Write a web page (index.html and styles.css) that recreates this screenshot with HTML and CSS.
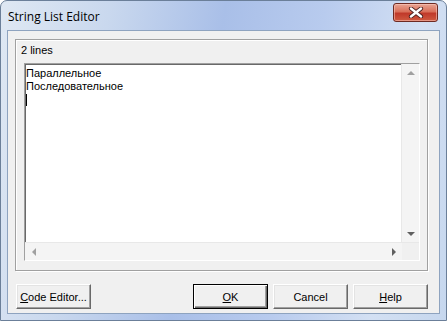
FILE: index.html
```html
<!DOCTYPE html>
<html lang="en">
<head>
    <meta charset="UTF-8">
    <title>String List Editor</title>
    <link rel="stylesheet" href="styles.css">
</head>
<body>
    <div class="window">
        <div class="titlebar">
            <span class="title">String List Editor</span>
            <div class="close-btn">
                <svg width="16" height="11" viewBox="0 0 16 11">
                    <path d="M3 1.5 L13 9.5 M13 1.5 L3 9.5" stroke="#4a2020" stroke-width="4.2" stroke-linecap="round"/>
                    <path d="M3 1.5 L13 9.5 M13 1.5 L3 9.5" stroke="#ffffff" stroke-width="2.4" stroke-linecap="round"/>
                </svg>
            </div>
        </div>

        <div class="client">
            <div class="panel">
                <div class="count">2 lines</div>
                <div class="memo">
                    <div class="memo-main">
                        <div class="memo-text">
                            <div>Параллельное</div>
                            <div>Последовательное</div>
                            <div class="caret"></div>
                        </div>
                        <div class="vscroll">
                            <div class="arrow up"></div>
                            <div class="track"></div>
                            <div class="arrow down"></div>
                        </div>
                    </div>
                    <div class="hscroll">
                        <div class="arrow left"></div>
                        <div class="track"></div>
                        <div class="arrow right"></div>
                        <div class="corner"></div>
                    </div>
                </div>
            </div>

            <div class="buttons">
                <button class="btn"><u>C</u>ode Editor...</button>
                <div class="right-buttons">
                    <button class="btn default"><u>O</u>K</button>
                    <button class="btn">Cancel</button>
                    <button class="btn"><u>H</u>elp</button>
                </div>
            </div>
        </div>
    </div>
</body>
</html>
```

FILE: styles.css
```css
body {
    margin: 0;
    background: #ffffff;
    font-family: "Liberation Sans", Arial, sans-serif;
}
.window {
    width: 447px;
    height: 321px;
    box-sizing: border-box;
    border: 1px solid #6b7f99;
    border-radius: 7px 7px 0 0;
    background: linear-gradient(100deg, #dfe8f3 0%, #c9d8ee 22%, #a9bfe8 45%, #b8cbee 65%, #d3e0f3 85%, #c6d7ee 100%);
    display: flex;
    flex-direction: column;
    overflow: hidden;
}
.titlebar {
    height: 29px;
    display: flex;
    align-items: flex-start;
    justify-content: space-between;
    padding: 0 7px 0 7px;
}
.title {
    font-family: "Open Sans", "Noto Sans", sans-serif;
    font-size: 12px;
    color: #000;
    margin-top: 7px;
}
.close-btn {
    width: 43px;
    height: 17px;
    margin-top: 2px;
    margin-right: 1px;
    border: 1px solid #6e2a22;
    border-radius: 3px;
    background: linear-gradient(#e8a493 0%, #d9705a 45%, #c0392a 55%, #cf5a40 100%);
    box-shadow: inset 0 0 0 1px rgba(255, 210, 200, 0.5);
    display: flex;
    align-items: center;
    justify-content: center;
}
.client {
    flex: 1;
    margin: 0 6px 6px 6px;
    border: 1px solid #8ea3bf;
    background: #f0f0f0;
    display: flex;
    flex-direction: column;
    padding: 8px 11px 0 7px;
}
.panel {
    height: 232px;
    box-sizing: border-box;
    border: 1px solid #a0a0a0;
    box-shadow: inset 1px 1px 0 #fff, 1px 1px 0 #fff;
    padding: 4px 7px 0 4px;
}
.count {
    font-size: 11px;
    height: 19px;
    line-height: 13px;
    padding-left: 1px;
}
.memo {
    height: 198px;
    box-sizing: border-box;
    border: 1px solid #a0a0a0;
    border-right-color: #fff;
    border-bottom-color: #fff;
    box-shadow: inset 1px 1px 0 #696969;
    background: #fff;
    margin-left: 4px;
    display: flex;
    flex-direction: column;
}
.memo-main {
    flex: 1;
    display: flex;
}
.memo-text {
    flex: 1;
    padding: 3px 0 0 1px;
    font-size: 11px;
    line-height: 13px;
}
.caret {
    width: 1px;
    height: 12px;
    background: #000;
    margin-top: 1px;
}
.vscroll {
    width: 17px;
    display: flex;
    flex-direction: column;
    background: #f4f4f4;
    border-left: 1px solid #e8e8e8;
}
.hscroll {
    height: 17px;
    display: flex;
    background: #f4f4f4;
    border-top: 1px solid #e8e8e8;
}
.track {
    flex: 1;
}
.arrow {
    width: 17px;
    height: 17px;
    display: flex;
    align-items: center;
    justify-content: center;
}
.arrow::after {
    content: "";
    width: 0;
    height: 0;
    border: 4px solid transparent;
}
.arrow.up::after {
    border-bottom-color: #a0a0a0;
    border-top-width: 0;
}
.arrow.down::after {
    border-top-color: #606060;
    border-bottom-width: 0;
}
.arrow.left::after {
    border-right-color: #a0a0a0;
    border-left-width: 0;
}
.arrow.right::after {
    border-left-color: #606060;
    border-right-width: 0;
}
.corner {
    width: 17px;
    background: #f0f0f0;
}
.buttons {
    display: flex;
    justify-content: space-between;
    margin-top: 13px;
    padding-left: 1px;
}
.right-buttons {
    display: flex;
    gap: 5px;
}
.btn {
    width: 75px;
    height: 25px;
    box-sizing: border-box;
    font-family: "Liberation Sans", Arial, sans-serif;
    font-size: 11px;
    color: #000;
    background: #f0f0f0;
    border: 1px solid;
    border-color: #fff #696969 #696969 #fff;
    box-shadow: inset -1px -1px 0 #a0a0a0, inset 1px 1px 0 #e3e3e3;
    padding: 0;
}
.btn.default {
    border: 1px solid #000;
    box-shadow: inset 1px 1px 0 #fff, inset -1px -1px 0 #696969, inset -2px -2px 0 #a0a0a0;
}
```
